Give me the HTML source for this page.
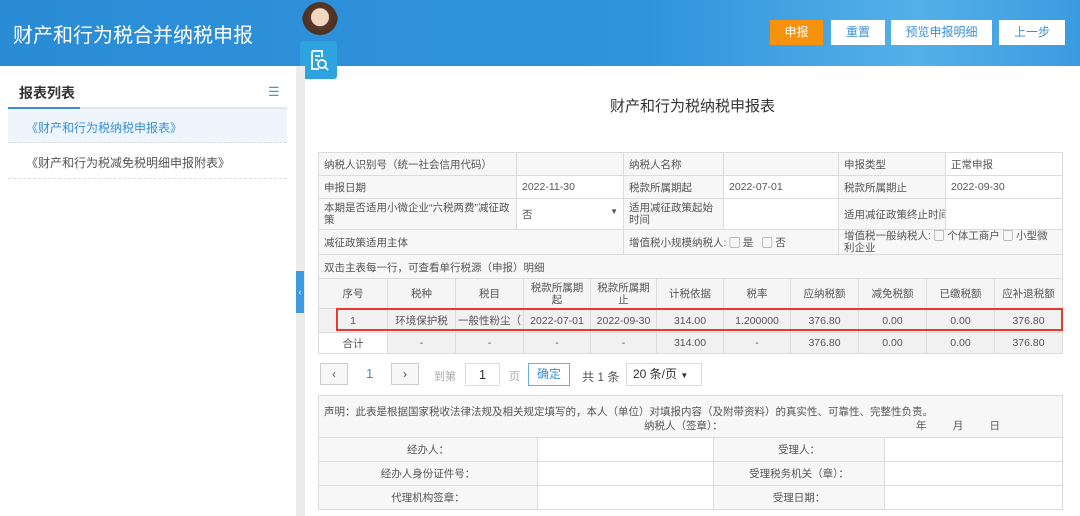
<!DOCTYPE html>
<html><head><meta charset="utf-8"><style>
*{box-sizing:border-box;margin:0;padding:0}
body{width:1080px;height:516px;overflow:hidden;background:#fff;font-family:"Liberation Sans","Noto Sans CJK SC",sans-serif;font-size:11px;color:#555;position:relative}
.hd{position:absolute;left:0;top:0;width:1080px;height:66px;background:linear-gradient(90deg,#2b8cd6 0%,#2f94dc 60%,#55b0e8 85%,#3a9be0 100%)}
.hd h1{position:absolute;left:13px;top:19px;font-size:20px;color:#fff;font-weight:normal;letter-spacing:0}
.btn{position:absolute;top:20px;height:25px;line-height:25px;text-align:center;font-size:12px;background:#fff;color:#3a8fd8}
.abs{position:absolute}
.side{position:absolute;left:0;top:66px;width:296px;height:450px;background:#fff}
.gap{position:absolute;left:296px;top:66px;width:9px;height:450px;background:#ececec}
table{border-collapse:collapse;position:absolute;table-layout:fixed}
td{border:1px solid #dcdcdc;padding:0 5px;font-size:10.5px;color:#555;overflow:hidden;white-space:nowrap}
.g td.l{background:#f7f7f7}
</style></head><body>
<div class="hd"><h1>财产和行为税合并纳税申报</h1>
<div class="btn" style="left:770px;width:53px;background:#f7920d;color:#fff">申报</div>
<div class="btn" style="left:831px;width:54px">重置</div>
<div class="btn" style="left:891px;width:101px">预览申报明细</div>
<div class="btn" style="left:999px;width:66px">上一步</div>
</div>
<div class="abs" style="left:302px;top:2px;width:36px;height:38px;border-radius:50%;background:radial-gradient(circle at 50% 40%,#f3d6c0 30%,#5a3a2a 32%,#4a3020 60%,transparent 62%)"></div>
<div class="abs" style="left:300px;top:41px;width:37px;height:38px;background:#2fa2e0;border-radius:3px">
<svg width="37" height="38" viewBox="0 0 37 38"><path d="M12 10h10v6M12 10v18h7M15 15h5M15 19h3" stroke="#fff" stroke-width="1.8" fill="none"/><circle cx="22" cy="23" r="4" stroke="#fff" stroke-width="1.8" fill="none"/><path d="M25 26l3 3" stroke="#fff" stroke-width="1.8"/></svg></div>
<div class="side">
<div class="abs" style="left:19px;top:17px;font-size:14px;font-weight:bold;color:#333">报表列表</div>
<div class="abs" style="left:268px;top:18px;color:#3a9be0;font-size:13px">&#9776;</div>
<div class="abs" style="left:8px;top:41px;width:279px;height:2px;background:#e6e6e6"></div>
<div class="abs" style="left:8px;top:41px;width:72px;height:2px;background:#3a8fd8"></div>
<div class="abs" style="left:8px;top:43px;width:279px;height:34px;background:#eef5fc;border-bottom:1px dashed #ddd"></div>
<div class="abs" style="left:26px;top:53px;font-size:12px;color:#3a8fd8">《财产和行为税纳税申报表》</div>
<div class="abs" style="left:26px;top:88px;font-size:12px;color:#555">《财产和行为税减免税明细申报附表》</div>
<div class="abs" style="left:8px;top:112px;width:279px;border-bottom:1px dashed #ddd"></div>
</div>
<div class="gap"></div>
<div class="abs" style="left:296px;top:271px;width:8px;height:42px;background:#3a9be0;color:#fff;font-size:9px;line-height:42px;text-align:center">‹</div>
<div class="abs" style="left:305px;top:95px;width:775px;text-align:center;font-size:15px;color:#333">财产和行为税纳税申报表</div>

<table class="g" style="left:318px;top:152px;width:744px">
<colgroup><col style="width:198px"><col style="width:107px"><col style="width:100px"><col style="width:115px"><col style="width:107px"><col style="width:117px"></colgroup>
<tr style="height:23px"><td class="l">纳税人识别号（统一社会信用代码）</td><td class="l"></td><td class="l">纳税人名称</td><td class="l"></td><td class="l">申报类型</td><td style="background:#fff">正常申报</td></tr>
<tr style="height:23px"><td class="l">申报日期</td><td>2022-11-30</td><td class="l">税款所属期起</td><td>2022-07-01</td><td class="l">税款所属期止</td><td>2022-09-30</td></tr>
<tr style="height:31px"><td class="l" style="white-space:normal;line-height:12px">本期是否适用小微企业“六税两费”减征政策</td><td>否<span style="float:right;font-size:8px">▼</span></td><td class="l" style="white-space:normal;line-height:12px">适用减征政策起始时间</td><td></td><td class="l">适用减征政策终止时间</td><td></td></tr>
<tr style="height:24px"><td class="l" colspan="2">减征政策适用主体</td><td class="l" colspan="2">增值税小规模纳税人: ▢ 是 &nbsp; ▢ 否</td><td class="l" colspan="2" style="white-space:normal;line-height:12px">增值税一般纳税人: ▢ 个体工商户 ▢ 小型微利企业</td></tr>
<tr style="height:25px"><td class="l" colspan="6">双击主表每一行，可查看单行税源（申报）明细</td></tr>
</table>
<table style="left:318px;top:278px;width:744px;text-align:center">
<colgroup><col style="width:69px"><col style="width:68px"><col style="width:68px"><col style="width:67px"><col style="width:66px"><col style="width:67px"><col style="width:67px"><col style="width:68px"><col style="width:68px"><col style="width:68px"><col style="width:68px"></colgroup>
<tr style="height:30px;background:#f5f5f5"><td>序号</td><td>税种</td><td>税目</td><td style="white-space:normal;line-height:12px">税款所属期起</td><td style="white-space:normal;line-height:12px">税款所属期止</td><td>计税依据</td><td>税率</td><td>应纳税额</td><td>减免税额</td><td>已缴税额</td><td>应补退税额</td></tr>
<tr style="height:24px;background:#f1f1f1;color:#333"><td>1</td><td>环境保护税</td><td style="text-align:left;padding:0 2px">一般性粉尘（</td><td style="padding:0 2px">2022-07-01</td><td style="padding:0 2px">2022-09-30</td><td>314.00</td><td>1.200000</td><td>376.80</td><td>0.00</td><td>0.00</td><td>376.80</td></tr>
<tr style="height:21px;background:#f1f1f1"><td style="background:#fff">合计</td><td>-</td><td>-</td><td>-</td><td>-</td><td>314.00</td><td>-</td><td>376.80</td><td>0.00</td><td>0.00</td><td>376.80</td></tr>
</table>
<div class="abs" style="left:336px;top:308px;width:727px;height:23px;border:2px solid #e8392e"></div>

<div class="abs" style="left:320px;top:363px;width:28px;height:22px;border:1px solid #ccc;background:#f7f7f7;text-align:center;line-height:20px;font-size:12px">‹</div>
<div class="abs" style="left:366px;top:366px;color:#3a8fd8;font-size:13px">1</div>
<div class="abs" style="left:391px;top:363px;width:28px;height:22px;border:1px solid #ccc;background:#f7f7f7;text-align:center;line-height:20px;font-size:12px">›</div>
<div class="abs" style="left:434px;top:368px;color:#aaa">到第</div>
<div class="abs" style="left:465px;top:363px;width:35px;height:23px;border:1px solid #ddd;text-align:center;line-height:21px;font-size:13px;color:#333">1</div>
<div class="abs" style="left:509px;top:368px;color:#aaa">页</div>
<div class="abs" style="left:528px;top:363px;width:42px;height:23px;border:1px solid #6aaee0;text-align:center;line-height:21px;font-size:12px;color:#3a8fd8">确定</div>
<div class="abs" style="left:582px;top:368px;font-size:12px;color:#555">共 1 条</div>
<div class="abs" style="left:626px;top:363px;width:76px;height:23px;border:1px solid #ddd;line-height:21px;font-size:12px;color:#333;padding-left:6px">20 条/页 <span style="font-size:8px">▼</span></div>

<table style="left:318px;top:395px;width:744px">
<colgroup><col style="width:219px"><col style="width:176px"><col style="width:171px"><col style="width:178px"></colgroup>
<tr style="height:42px;background:#f7f7f7"><td colspan="4" style="position:relative;vertical-align:top;padding-top:8px">声明：此表是根据国家税收法律法规及相关规定填写的，本人（单位）对填报内容（及附带资料）的真实性、可靠性、完整性负责。<div style="position:absolute;left:325px;top:22px">纳税人（签章）：</div><div style="position:absolute;left:597px;top:22px">年 &nbsp; &nbsp; &nbsp; &nbsp; 月 &nbsp; &nbsp; &nbsp; &nbsp; 日</div></td></tr>
<tr style="height:24px;text-align:center"><td style="background:#f7f7f7">经办人：</td><td></td><td style="background:#f7f7f7">受理人：</td><td></td></tr>
<tr style="height:24px;text-align:center"><td style="background:#f7f7f7">经办人身份证件号：</td><td></td><td style="background:#f7f7f7">受理税务机关（章）：</td><td></td></tr>
<tr style="height:24px;text-align:center"><td style="background:#f7f7f7">代理机构签章：</td><td></td><td style="background:#f7f7f7">受理日期：</td><td></td></tr>
</table>
</body></html>
